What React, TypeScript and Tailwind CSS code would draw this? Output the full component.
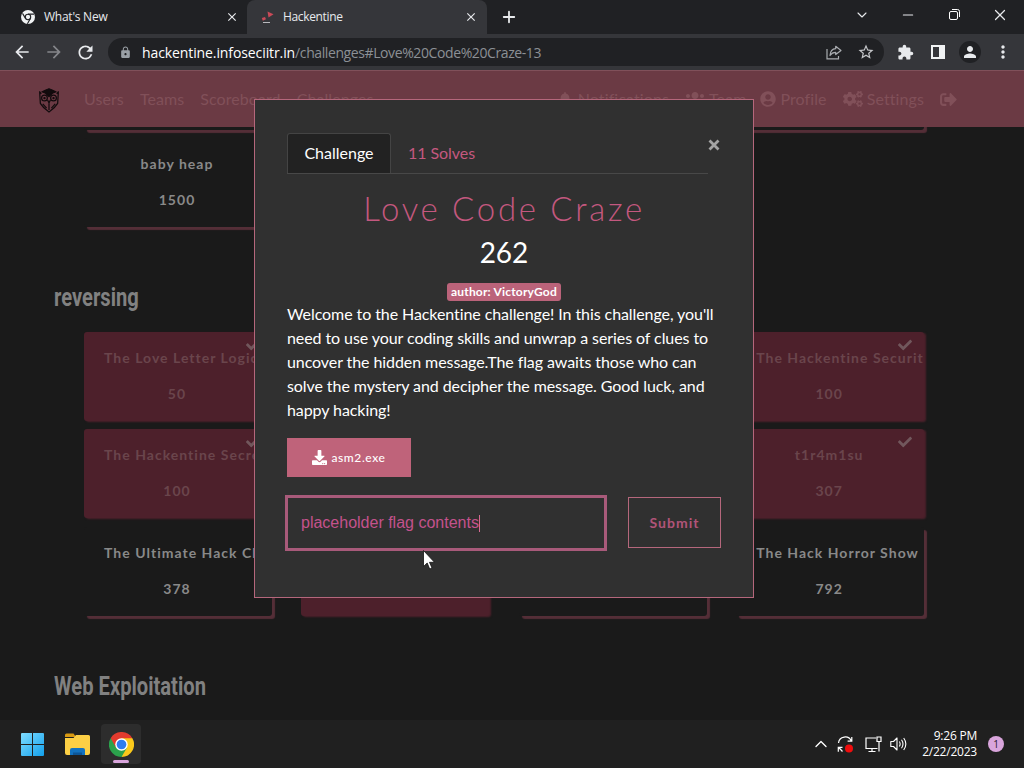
import type { ReactNode } from 'react';
import clsx from 'clsx';
import {
  FaBell,
  FaCheck,
  FaCogs,
  FaDownload,
  FaSignOutAlt,
  FaUserCircle,
  FaUsers,
} from 'react-icons/fa';
import {
  MdArrowBack,
  MdArrowForward,
  MdClose,
  MdExtension,
  MdLock,
  MdMoreVert,
  MdPerson,
  MdRefresh,
  MdStarBorder,
} from 'react-icons/md';
import { ChevronDown, ChevronUp, Minus, Plus, X } from 'lucide-react';

interface Challenge {
  name: string;
  points: number;
  solved?: boolean;
}

const previous: Challenge[] = [
  { name: '', points: 0 },
  { name: '', points: 0 },
  { name: '', points: 0 },
  { name: '', points: 0 },
  { name: 'baby heap', points: 1500 },
];

// unnamed entries sit behind the dialog and only show their frame
const reversing: Challenge[] = [
  { name: 'The Love Letter Logic', points: 50, solved: true },
  { name: '', points: 0, solved: true },
  { name: '', points: 0, solved: true },
  { name: 'The Hackentine Securit', points: 100, solved: true },
  { name: 'The Hackentine Secre', points: 100, solved: true },
  { name: '', points: 0, solved: true },
  { name: '', points: 0, solved: true },
  { name: 't1r4m1su', points: 307, solved: true },
  { name: 'The Ultimate Hack Ch', points: 378 },
  { name: '', points: 0, solved: true },
  { name: '', points: 0 },
  { name: 'The Hack Horror Show', points: 792 },
];

const flagInput = 'placeholder flag contents';

/* ---------- icons ---------- */

const ChromeMono = () => (
  <svg width="14" height="14" viewBox="0 0 14 14" fill="none">
    <circle cx="7" cy="7" r="7" fill="#f1f3f4" />
    <circle cx="7" cy="7" r="2.7" fill="#f1f3f4" stroke="#202124" strokeWidth="1.1" />
    <path d="M7 4.1h6M4.5 8.4L1.5 3.4M9.4 8.6L6.4 13.8" stroke="#202124" strokeWidth="1.1" />
  </svg>
);

const ChromeColor = () => (
  <svg width="25" height="25" viewBox="0 0 48 48">
    <path d="M24 24L3.2 12A24 24 0 0 1 44.8 12z" fill="#e33b2e" />
    <path d="M24 24L44.8 12A24 24 0 0 1 24 48z" fill="#fbc91b" />
    <path d="M24 24L24 48A24 24 0 0 1 3.2 12z" fill="#2ba24c" />
    <path d="M24 12h20.8l-10.4 18z" fill="#fbc91b" />
    <path d="M13.6 30L3.2 12 24 12z" fill="#e33b2e" />
    <path d="M34.4 30L24 48 13.6 30z" fill="#2ba24c" />
    <circle cx="24" cy="24" r="12" fill="#fff" />
    <circle cx="24" cy="24" r="9.3" fill="#2f7cf0" />
  </svg>
);

const SiteIcon = () => (
  <svg width="14" height="14" viewBox="0 0 14 14">
    <path d="M6.5 1.5l6 2.8-5 3.2z" fill="#c94a58" />
    <path d="M.8 8l3.200-1 1 2.200-3.200 1.500z" fill="#c94a58" />
    <path d="M2 12.5h7" stroke="#b9b9bd" strokeWidth="1" />
  </svg>
);

const Owl = () => (
  <svg width="22" height="25" viewBox="0 0 22 26" fill="none" stroke="#120b0d" strokeWidth="1.3">
    <path d="M4 4Q7 2 11 .8 15 2 18 4L14.5 5.5 11 9 7.5 5.5z" fill="#120b0d" />
    <path d="M1 3.5L3 6M21 3.5L19 6M1.3 4.5L2 16Q5 21 11 25 17 21 20 16L20.7 4.5" />
    <circle cx="6.3" cy="10.5" r="3" />
    <circle cx="15.7" cy="10.5" r="3" />
    <circle cx="6.3" cy="10.5" r=".6" fill="#120b0d" />
    <circle cx="15.7" cy="10.5" r=".6" fill="#120b0d" />
    <path d="M9.500 12.500l1.500 3 1.500-3M11 16v7M4.500 16.500l4 4.500M17.500 16.500l-4 4.500" />
  </svg>
);

const ShareIcon = () => (
  <svg width="16" height="15" viewBox="0 0 16 15" fill="none" stroke="#a9acb0" strokeWidth="1.2">
    <path d="M1 4v9.8h11.5V11" />
    <path d="M9.7 1.3L15 5.5 9.7 9.5V7.3Q6 7.3 4 10.5 4.5 4 9.7 3.7z" strokeLinejoin="round" />
  </svg>
);

const RestoreIcon = () => (
  <svg width="11" height="11" viewBox="0 0 11 11" fill="none" stroke="#fff">
    <rect x=".5" y="2.5" width="8" height="8" rx="1.5" />
    <path d="M3 .5h5.500q2 0 2 2V8" />
  </svg>
);

const WindowsLogo = () => (
  <svg width="23" height="23" viewBox="0 0 23 23">
    <defs>
      <linearGradient id="win" x1="0" y1="0" x2="1" y2="1">
        <stop offset="0" stopColor="#7fdcff" />
        <stop offset="1" stopColor="#12a0ec" />
      </linearGradient>
    </defs>
    <path d="M0 1q0-1 1-1h10v11H0zM12 0h10q1 0 1 1v10H12zM0 12h11v11H1q-1 0-1-1zM12 12h11v10q0 1-1 1H12z" fill="url(#win)" />
  </svg>
);

const FolderIcon = () => (
  <svg width="25" height="23" viewBox="0 0 25 23">
    <path d="M0 2q0-1.500 1.500-1.500H8.500L11 4H0z" fill="#d99a12" />
    <path d="M0 5h8.500L11 2h12.500Q25 2 25 3.500V20q0 2-2 2H2q-2 0-2-2z" fill="#fccf45" />
    <path d="M5 22v-5q0-2 2-2h11q2 0 2 2v5z" fill="#1272c0" />
    <path d="M8 22v-2.500h9V22z" fill="#0c5596" />
  </svg>
);

const SyncIcon = () => (
  <svg width="17" height="17" viewBox="0 0 17 17" fill="none" stroke="#fff" strokeWidth="1.2">
    <path d="M1.5 7A6.7 6.7 0 0 1 14.3 5M14.8 1v4.2h-4.2M5.5 15.5L1.8 11.5M1.3 15.8v-4.500h4.200" />
    <circle cx="12" cy="12.5" r="4" fill="#f00d0d" stroke="none" />
  </svg>
);

const NetworkIcon = () => (
  <svg width="17" height="17" viewBox="0 0 17 17" fill="none" stroke="#fff" strokeWidth="1.2">
    <path d="M11 2H1v10.5h11.5M3.5 15.5h7M7 12.5v3" />
    <path d="M12 1h4v4.5h-4zM14 5.5v10" />
  </svg>
);

const SpeakerIcon = () => (
  <svg width="17" height="16" viewBox="0 0 17 16" fill="none" stroke="#fff" strokeWidth="1.1">
    <path d="M.8 5.500h2.700L7 2v12L3.500 10.500H.8z" strokeLinejoin="round" />
    <path d="M9.300 5.500q1.700 2.500 0 5M11.500 3.700q3 4.300 0 8.600M13.700 2q4.300 6 0 12" />
  </svg>
);

/* ---------- browser ---------- */

const TabStrip = () => (
  <div className="h-[34px] shrink-0 flex bg-[#202124] text-[12px] text-[#e8eaed] font-['Open_Sans',sans-serif]">
    <div className="w-[247px] flex items-center pl-[21px] pr-2">
      <ChromeMono />
      <span className="ml-[9px] flex-1 tracking-[-0.25px]">What's New</span>
      <MdClose className="size-[14px]" />
    </div>
    <div className="w-[240px] flex items-center pl-[14px] pr-[9px] bg-[#35363a] rounded-t-lg">
      <SiteIcon />
      <span className="ml-[8px] flex-1 tracking-[-0.35px]">Hackentine</span>
      <MdClose className="size-[14px]" />
    </div>
    <div className="flex items-center pl-[13px] flex-1">
      <Plus className="size-[18px]" strokeWidth={2.4} />
    </div>
    <div className="flex h-[29px] items-center pr-[15px]">
      <ChevronDown className="size-[16px]" strokeWidth={1.6} />
      <Minus className="ml-[30px] size-[16px]" strokeWidth={1.6} />
      <div className="ml-[33px]">
        <RestoreIcon />
      </div>
      <X className="ml-[31px] size-[18px]" strokeWidth={1.6} />
    </div>
  </div>
);

const Toolbar = () => (
  <div className="h-[36px] shrink-0 flex items-center bg-[#35363a] pl-[12px] text-[#e8eaed]">
    <MdArrowBack className="size-[20px]" />
    <MdArrowForward className="ml-[12px] size-[20px] text-[#85868a]" />
    <MdRefresh className="ml-[11px] size-[21px]" />
    <div className="ml-[12px] flex h-[28px] w-[776px] items-center rounded-full bg-[#202124] pl-[11px] pr-[9px]">
      <MdLock className="size-[13px] text-[#9aa0a6]" />
      <span className="ml-[10px] flex-1 whitespace-nowrap font-['Open_Sans',sans-serif] text-[14px] tracking-[-0.4px] text-[#8c9095]">
        <span className="tracking-[-0.1px] text-white">hackentine.infoseciitr.in</span>
        /challenges#Love%20Code%20Craze-13
      </span>
      <ShareIcon />
      <MdStarBorder className="ml-[15px] size-[18px] text-[#c5c7ca]" />
    </div>
    <MdExtension className="ml-[13px] size-[17px]" />
    <div className="ml-[17px] flex h-[14px] w-[14px] justify-end border-2 border-[#f1f3f4]">
      <div className="w-[4px] bg-[#f1f3f4]" />
    </div>
    <div className="ml-[14px] flex size-[22px] items-center justify-center rounded-full bg-[#202124]">
      <MdPerson className="size-[18px]" />
    </div>
    <MdMoreVert className="ml-[12px] size-[20px]" />
  </div>
);

/* ---------- site ---------- */

const NavItem = ({ icon, children }: { icon?: ReactNode; children?: ReactNode }) => (
  <span className="flex items-center gap-1">
    {icon}
    {children}
  </span>
);

const Navbar = () => (
  <div className="relative h-[57px] shrink-0 flex items-center border-t border-[#80505a] bg-[#6b3a44] pl-[38px] pr-[67px] text-[16px] text-[#815059]">
    <div className="pt-[3px]">
      <Owl />
    </div>
    <div className="ml-6 flex gap-4 tracking-[0.08px]">
      <NavItem>Users</NavItem>
      <NavItem>Teams</NavItem>
      <NavItem>Scoreboard</NavItem>
      <NavItem>Challenges</NavItem>
    </div>
    <div className="ml-auto flex gap-4 tracking-[0.1px]">
      <NavItem icon={<FaBell className="mr-[2px] size-[14px]" />}>Notifications</NavItem>
      <NavItem icon={<FaUsers className="size-[20px]" />}>Team</NavItem>
      <NavItem icon={<FaUserCircle className="-ml-[2px]" />}>Profile</NavItem>
      <NavItem icon={<FaCogs className="size-[20px]" />}>Settings</NavItem>
      <NavItem icon={<FaSignOutAlt className="size-[17px]" />} />
    </div>
  </div>
);

const ChallengeCard = ({ name, points, solved }: Challenge) => (
  <div
    className={clsx(
      'relative h-[89px] overflow-hidden whitespace-nowrap rounded-[3px] pl-[20px] pr-[22px] pt-[16px] text-center text-[14px] font-bold leading-5 tracking-[1.02px]',
      solved
        ? 'bg-[#4d202b] text-[#6a454c] shadow-[2px_1px_2px_#4d202b]'
        : 'bg-[#1a1a1a] text-[#898989] shadow-[3px_3px_1px_#542e37]'
    )}
  >
    {name && (
      <>
        <p>{name}</p>
        <p className="mt-4">{points}</p>
      </>
    )}
    {solved && <FaCheck className="absolute right-[12px] top-[6px] size-[14px] text-[#71575c]" />}
  </div>
);

const ChallengeGrid = ({ items }: { items: Challenge[] }) => (
  <div className="grid grid-cols-[repeat(4,188px)] gap-x-[29.4px] gap-y-[8.4px] pl-[84px]">
    {items.map((item, i) => (
      <ChallengeCard key={i} {...item} />
    ))}
  </div>
);

const Category = ({ children }: { children: ReactNode }) => (
  <h3 className="ml-[54px] w-max origin-left scale-x-[0.806] font-['Roboto',sans-serif] text-[25px] font-bold leading-[32px] text-[#818181]">
    {children}
  </h3>
);

const ChallengeModal = () => (
  <div className="absolute left-[254px] top-[99px] h-[499px] w-[500px] border border-[#b5677c] bg-[#303030] px-[32px] pt-[33px] text-white">
    <div className="flex items-start">
      <div className="flex h-[41px] w-[421px] border-b border-[#484848] text-[16px]">
        <div className="flex w-[104px] items-center justify-center rounded-t-[3px] border border-b-0 border-[#444] bg-[#222] pb-[2px]">
          Challenge
        </div>
        <div className="flex items-center pb-px pl-[17px] tracking-[-0.05px] text-[#c4587f]">11 Solves</div>
      </div>
      <svg className="mt-[6px] shrink-0" width="12" height="12" viewBox="0 0 12 12">
        <path d="M1.500 1.500l9 9M10.500 1.500l-9 9" stroke="#a5a5a5" strokeWidth="2.8" />
      </svg>
    </div>
    <h3 className="mt-[13px] text-center text-[33px] font-light leading-[42px] tracking-[2.7px] text-[#c4587f]">
      Love Code Craze
    </h3>
    <div className="mt-px text-center text-[28px] leading-[44px]">262</div>
    <div className="mt-[9px] flex h-[18px] justify-center">
      <span className="rounded-[3px] bg-[#bb637a] px-[4px] text-[12px] font-bold leading-[18px] tracking-[0.18px]">
        author: VictoryGod
      </span>
    </div>
    <p className="mt-px w-[440px] text-[16px] leading-6 tracking-[-0.08px]">
      Welcome to the Hackentine challenge! In this challenge, you'll <br />
      need to use your coding skills and unwrap a series of clues to <br />
      uncover the hidden message.The flag awaits those who can <br />
      solve the mystery and decipher the message. Good luck, and <br />
      happy hacking!
    </p>
    <div className="mt-[16px] flex h-[39px] w-[124px] items-center justify-center gap-1 bg-[#bf637a] text-[12px] font-medium tracking-[0.6px]">
      <FaDownload className="size-[15px]" />
      asm2.exe
    </div>
    <div className="-ml-[2px] mt-[18px] flex items-start">
      <div className="flex h-[56px] w-[322px] items-center border-[3px] border-[#a85a7a] pl-[13px] font-['Liberation_Sans',sans-serif] text-[16px] text-[#c4528c]">
        {flagInput}
        <span className="h-[17px] w-px bg-[#d66a92]" />
      </div>
      <div className="ml-[21px] mt-[2px] flex h-[51px] w-[93px] items-center justify-center border border-[#b5677c] text-[14px] font-bold tracking-[1px] text-[#b05478]">
        Submit
      </div>
    </div>
  </div>
);

/* ---------- taskbar ---------- */

const Taskbar = () => (
  <div className="flex h-[48px] shrink-0 items-center bg-[#202020] pl-[21px] pr-[20px] text-white">
    <WindowsLogo />
    <div className="ml-[21px]">
      <FolderIcon />
    </div>
    <div className="relative ml-[11px] flex size-[40px] items-center justify-center rounded-[4px] bg-[#2d2d2d]">
      <ChromeColor />
      <div className="absolute bottom-[1px] h-[3px] w-[16px] rounded-full bg-[#d9a5dc]" />
    </div>
    <div className="ml-auto flex items-center">
      <ChevronUp className="size-[20px]" strokeWidth={1.6} />
      <div className="ml-[6px]">
        <SyncIcon />
      </div>
      <div className="ml-[11px]">
        <NetworkIcon />
      </div>
      <div className="ml-[8px]">
        <SpeakerIcon />
      </div>
      <div className="ml-[12px] w-[58px] whitespace-nowrap text-right font-['Open_Sans',sans-serif] text-[12px] leading-4 tracking-[-0.22px]">
        <p>9:26 PM</p>
        <p>2/22/2023</p>
      </div>
      <div className="ml-[11px] flex size-[16px] items-center justify-center rounded-full bg-[#d9a5dc] font-['Open_Sans',sans-serif] text-[10px] text-[#2a1a2c]">
        1
      </div>
    </div>
  </div>
);

const Cursor = () => (
  <svg className="absolute left-[423px] top-[550px]" width="12" height="20" viewBox="0 0 12 20">
    <path d="M.5.5v16l3.700-3.500 2.500 6 2.300-1-2.500-5.700h5z" fill="#fff" stroke="#111" strokeWidth=".8" />
  </svg>
);

export default function App() {
  return (
    <div className="relative flex h-[768px] w-[1024px] flex-col overflow-hidden bg-[#1a1a1a] font-['Lato',sans-serif]">
      <TabStrip />
      <Toolbar />
      <Navbar />
      <div className="min-h-0 flex-1 overflow-hidden">
        <div className="-mt-[86px]">
          <ChallengeGrid items={previous} />
        </div>
        <div className="mb-[17.6px] mt-[55px]">
          <Category>reversing</Category>
        </div>
        <ChallengeGrid items={reversing} />
        <div className="mt-[55px]">
          <Category>Web Exploitation</Category>
        </div>
      </div>
      <Taskbar />
      <ChallengeModal />
      <Cursor />
    </div>
  );
}
